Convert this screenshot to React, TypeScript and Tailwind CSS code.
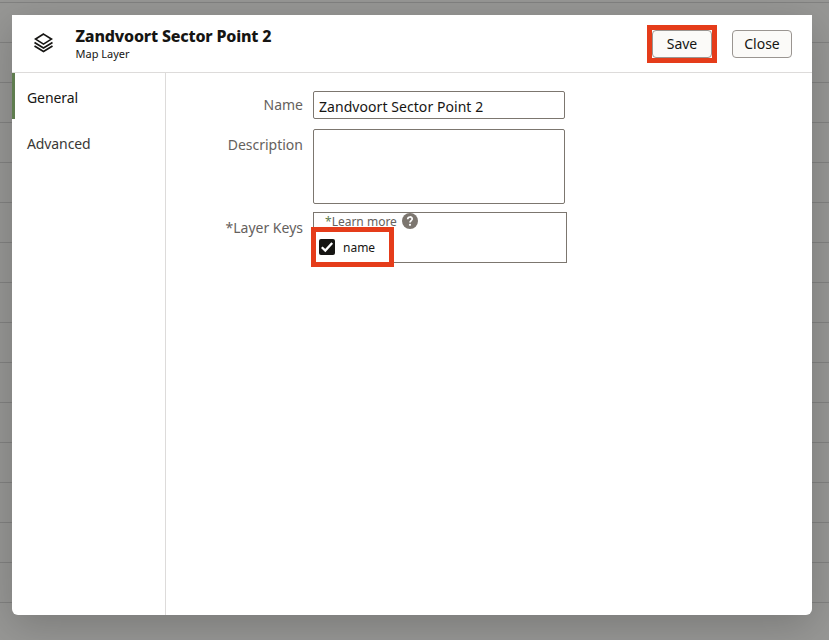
import type { ReactNode } from "react";

function LayersIcon() {
  return (
    <svg width="20" height="20" viewBox="0 0 20 20" fill="none" stroke="#161513" strokeWidth="1.7">
      <path d="M9.5 1.1 L17.4 6.1 L9.5 11.1 L1.6 6.1 Z" />
      <path d="M0.5 9.4 L9.5 14.9 L18.5 9.4" />
      <path d="M0.5 13 L9.5 18.5 L18.5 13" />
    </svg>
  );
}

function HelpIcon() {
  return (
    <svg width="16" height="16" viewBox="0 0 16 16" fill="none">
      <circle cx="8" cy="8" r="8" fill="#7c766f" />
      <path d="M5.7 6.3 C5.8 3.2 10.3 3.3 10.2 6 C10.1 7.5 8 7.7 8 9.5" stroke="#fff" strokeWidth="1.7" />
      <circle cx="8" cy="11.8" r="1.1" fill="#fff" />
    </svg>
  );
}

function Button({ children }: { children: ReactNode }) {
  return (
    <button className="flex h-7 w-[60px] items-center justify-center rounded-[4px] border border-[#9a9591] bg-[#fbfaf8] text-sm leading-5 text-[#161513]">
      {children}
    </button>
  );
}

function Row({ label, className, children }: { label: string; className: string; children: ReactNode }) {
  return (
    <div className="flex items-start">
      <div className={"w-[137px] shrink-0 text-right text-sm leading-5 text-[#65615d] " + className}>{label}</div>
      <div className="ml-[10px]">{children}</div>
    </div>
  );
}

export default function App() {
  return (
    <div className="relative h-[640px] w-[829px] overflow-hidden bg-[#979795] font-['Noto_Sans',sans-serif]">
      <div className="absolute inset-x-0 top-0 flex flex-col">
        <div className="h-[3px] border-b border-[#828281]" />
        {Array.from({ length: 15 }, (_, i) => (
          <div key={i} className="h-10 border-b border-[#828281]" />
        ))}
      </div>
      <section className="absolute top-[15px] left-3 flex h-[600px] w-[800px] flex-col rounded-b-[6px] bg-white shadow-[0_10px_40px_rgba(0,0,0,0.2)]">
        <header className="flex h-[58px] shrink-0 items-start border-b border-[#dddbda]">
          <div className="ml-[22px] mt-[18px]"><LayersIcon /></div>
          <div className="ml-[21.5px] mt-[11px] flex-1">
            <h1 className="text-base leading-5 font-extrabold tracking-[-0.18px] whitespace-nowrap text-[#161513]">Zandvoort Sector Point 2</h1>
            <p className="text-[11px] leading-4 text-[#161513]">Map Layer</p>
          </div>
          <div className="mt-[15px] mr-5 flex gap-5">
            <div className="relative">
              <Button>Save</Button>
              <div className="absolute -top-[5px] -left-[5px] h-[38px] w-[70px] border-[5px] border-[#e53c1a]" />
            </div>
            <Button>Close</Button>
          </div>
        </header>
        <div className="flex flex-1">
          <nav className="w-[154px] shrink-0 border-r border-[#dddbda] text-sm tracking-[-0.1px] text-[#161513]">
            <div className="flex h-[46px] items-center border-l-[3px] border-[#5f7d4f] pt-[3px] pl-3">General</div>
            <div className="flex h-[46px] items-center pt-[3px] pl-[15px] text-[#3a3836]">Advanced</div>
          </nav>
          <main className="flex flex-1 flex-col pt-[18px]">
            <Row label="Name" className="mt-1">
              <input className="block h-7 w-[252px] rounded-[2px] border border-[#7c766f] px-[5px] pt-[3px] text-sm tracking-[0.06px] text-[#161513] outline-none" defaultValue="Zandvoort Sector Point 2" />
            </Row>
            <div className="mt-[10px]">
              <Row label="Description" className="mt-[6px]">
                <textarea className="block h-[75px] w-[252px] resize-none rounded-[2px] border border-[#7c766f] outline-none" />
              </Row>
            </div>
            <div className="mt-2">
              <Row label="*Layer Keys" className="mt-[6px]">
                <div className="relative h-[51px] w-[254px] border border-[#7c766f]">
                  <div className="flex h-[18px] items-center pl-[11px] text-xs text-[#65615d]">
                    <span className="text-[#5f7d4f]">*</span>
                    <span>Learn more</span>
                    <span className="mb-[2px] ml-[5.5px]"><HelpIcon /></span>
                  </div>
                  <label className="mt-2 flex h-4 items-center pl-[5px] text-xs text-[#161513]">
                    <svg width="16" height="16" viewBox="0 0 16 16">
                      <rect width="16" height="16" rx="2" fill="#161513" />
                      <path d="M2.8 8.2 L6.3 11.6 L13.2 4" fill="none" stroke="#fff" strokeWidth="2.3" />
                    </svg>
                    <span className="ml-2 pt-[2px]">name</span>
                  </label>
                  <div className="absolute top-[14px] -left-[3px] h-10 w-[83px] border-[5px] border-[#e53c1a]" />
                </div>
              </Row>
            </div>
          </main>
        </div>
      </section>
    </div>
  );
}
